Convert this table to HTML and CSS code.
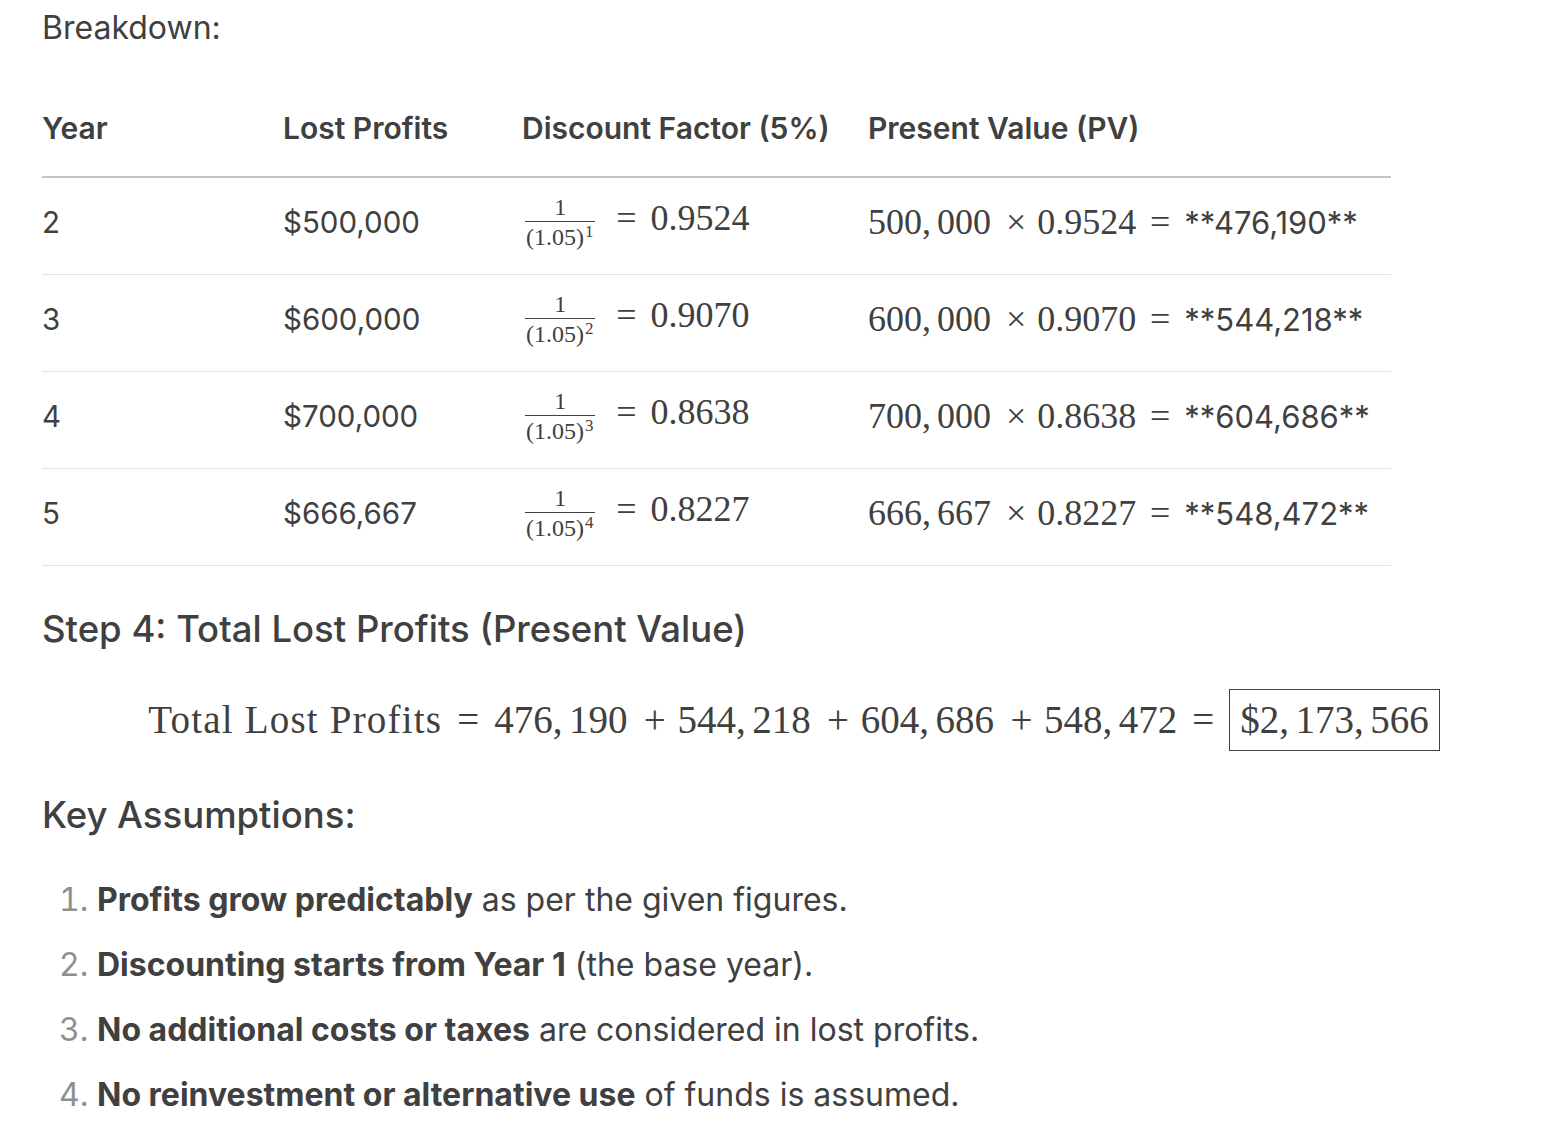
FILE: index.html
```html
<!DOCTYPE html>
<html lang="en">
<head>
<meta charset="utf-8">
<title>Breakdown</title>
<link rel="stylesheet" href="styles.css">
</head>
<body>
<div class="page">
  <p class="lead">Breakdown:</p>
  <table class="breakdown">
    <colgroup><col class="c1"><col class="c2"><col class="c3"><col class="c4"></colgroup>
    <thead>
      <tr><th>Year</th><th>Lost Profits</th><th>Discount Factor (5%)</th><th>Present Value (PV)</th></tr>
    </thead>
    <tbody>
      <tr>
        <td>2</td><td>$500,000</td>
        <td><span class="math"><span class="frac"><span class="num">1</span><span class="den">(1.05)<span class="sup">1</span></span></span><span class="rel">=</span>0.9524</span></td>
        <td><span class="math">500<span class="punct">,</span>000<span class="bin">×</span>0.9524<span class="rel">=</span></span><span class="plain">**476,190**</span></td>
      </tr>
      <tr>
        <td>3</td><td>$600,000</td>
        <td><span class="math"><span class="frac"><span class="num">1</span><span class="den">(1.05)<span class="sup">2</span></span></span><span class="rel">=</span>0.9070</span></td>
        <td><span class="math">600<span class="punct">,</span>000<span class="bin">×</span>0.9070<span class="rel">=</span></span><span class="plain">**544,218**</span></td>
      </tr>
      <tr>
        <td>4</td><td>$700,000</td>
        <td><span class="math"><span class="frac"><span class="num">1</span><span class="den">(1.05)<span class="sup">3</span></span></span><span class="rel">=</span>0.8638</span></td>
        <td><span class="math">700<span class="punct">,</span>000<span class="bin">×</span>0.8638<span class="rel">=</span></span><span class="plain">**604,686**</span></td>
      </tr>
      <tr>
        <td>5</td><td>$666,667</td>
        <td><span class="math"><span class="frac"><span class="num">1</span><span class="den">(1.05)<span class="sup">4</span></span></span><span class="rel">=</span>0.8227</span></td>
        <td><span class="math">666<span class="punct">,</span>667<span class="bin">×</span>0.8227<span class="rel">=</span></span><span class="plain">**548,472**</span></td>
      </tr>
    </tbody>
  </table>

  <h3 class="heading step">Step 4: Total Lost Profits (Present Value)</h3>

  <div class="display">
    <span class="math big"><span class="mtext">Total Lost Profits</span><span class="rel">=</span>476<span class="punct">,</span>190<span class="bin">+</span>544<span class="punct">,</span>218<span class="bin">+</span>604<span class="punct">,</span>686<span class="bin">+</span>548<span class="punct">,</span>472<span class="rel">=</span><span class="boxed">$2<span class="punct">,</span>173<span class="punct">,</span>566</span></span>
  </div>

  <h3 class="heading key">Key Assumptions:</h3>

  <ol class="assumptions">
    <li><strong>Profits grow predictably</strong> as per the given figures.</li>
    <li><strong>Discounting starts from Year 1</strong> (the base year).</li>
    <li><strong>No additional costs or taxes</strong> are considered in lost profits.</li>
    <li><strong>No reinvestment or alternative use</strong> of funds is assumed.</li>
  </ol>
</div>
</body>
</html>
```

FILE: styles.css
```css
html, body {
  margin: 0;
  padding: 0;
  background: #ffffff;
}

body {
  font-family: Inter, "Noto Sans", sans-serif;
  color: #404040;
}

.page {
  padding: 8px 6px 0 42px;
}

.lead {
  margin: 0;
  font-size: 32px;
  line-height: 40px;
  font-weight: 400;
}

.breakdown {
  margin-top: 32px;
  border-collapse: collapse;
  table-layout: fixed;
  width: 1349px;
}

.c1 { width: 241px; }
.c2 { width: 239px; }
.c3 { width: 346px; }
.c4 { width: 523px; }

.breakdown th {
  text-align: left;
  font-size: 30px;
  font-weight: 600;
  height: 96px;
  padding: 0;
  vertical-align: middle;
  border-bottom: 2px solid #c4c4c4;
  white-space: nowrap;
}

.breakdown td {
  font-size: 29.5px;
  height: 88px;
  padding: 0 0 8px 0;
  vertical-align: middle;
  border-bottom: 1px solid #e3e3e3;
  white-space: nowrap;
}

.math {
  font-family: "Liberation Serif", "Times New Roman", serif;
  font-size: 36px;
  white-space: nowrap;
}

.rel { margin: 0 0.385em; }
.bin { margin: 0 0.3em 0 0.42em; }
.punct { margin-right: 0.167em; }

.frac {
  display: inline-flex;
  flex-direction: column;
  align-items: center;
  vertical-align: middle;
  font-size: 24px;
  line-height: 1;
  margin: 0 7px 0 3px;
}

.num {
  padding: 0 0 2px;
}

.den {
  border-top: 1px solid #404040;
  padding: 1px 2px 0 1px;
}

.sup {
  font-size: 17px;
  vertical-align: 8px;
  margin-left: 1px;
}

.plain {
  font-family: Inter, "Noto Sans", sans-serif;
  font-size: 31px;
}

.heading {
  margin: 0;
  font-size: 36.5px;
  line-height: 44px;
  font-weight: 500;
}

.step { margin-top: 41px; }

.display {
  margin-top: 38px;
  height: 62px;
  display: flex;
  justify-content: center;
  align-items: center;
}

.math.big {
  font-size: 39px;
}

.mtext {
  letter-spacing: 1.2px;
}

.boxed {
  display: inline-block;
  border: 1px solid #404040;
  padding: 0 10px;
  line-height: 60px;
}

.key { margin-top: 42px; }

.assumptions {
  margin: 43px 0 0;
  padding-left: 55px;
  font-size: 32px;
  line-height: 40px;
}

.assumptions li + li {
  margin-top: 25px;
}

.assumptions li::marker {
  color: #8f8f8f;
}

.assumptions strong {
  font-weight: 700;
}
```
